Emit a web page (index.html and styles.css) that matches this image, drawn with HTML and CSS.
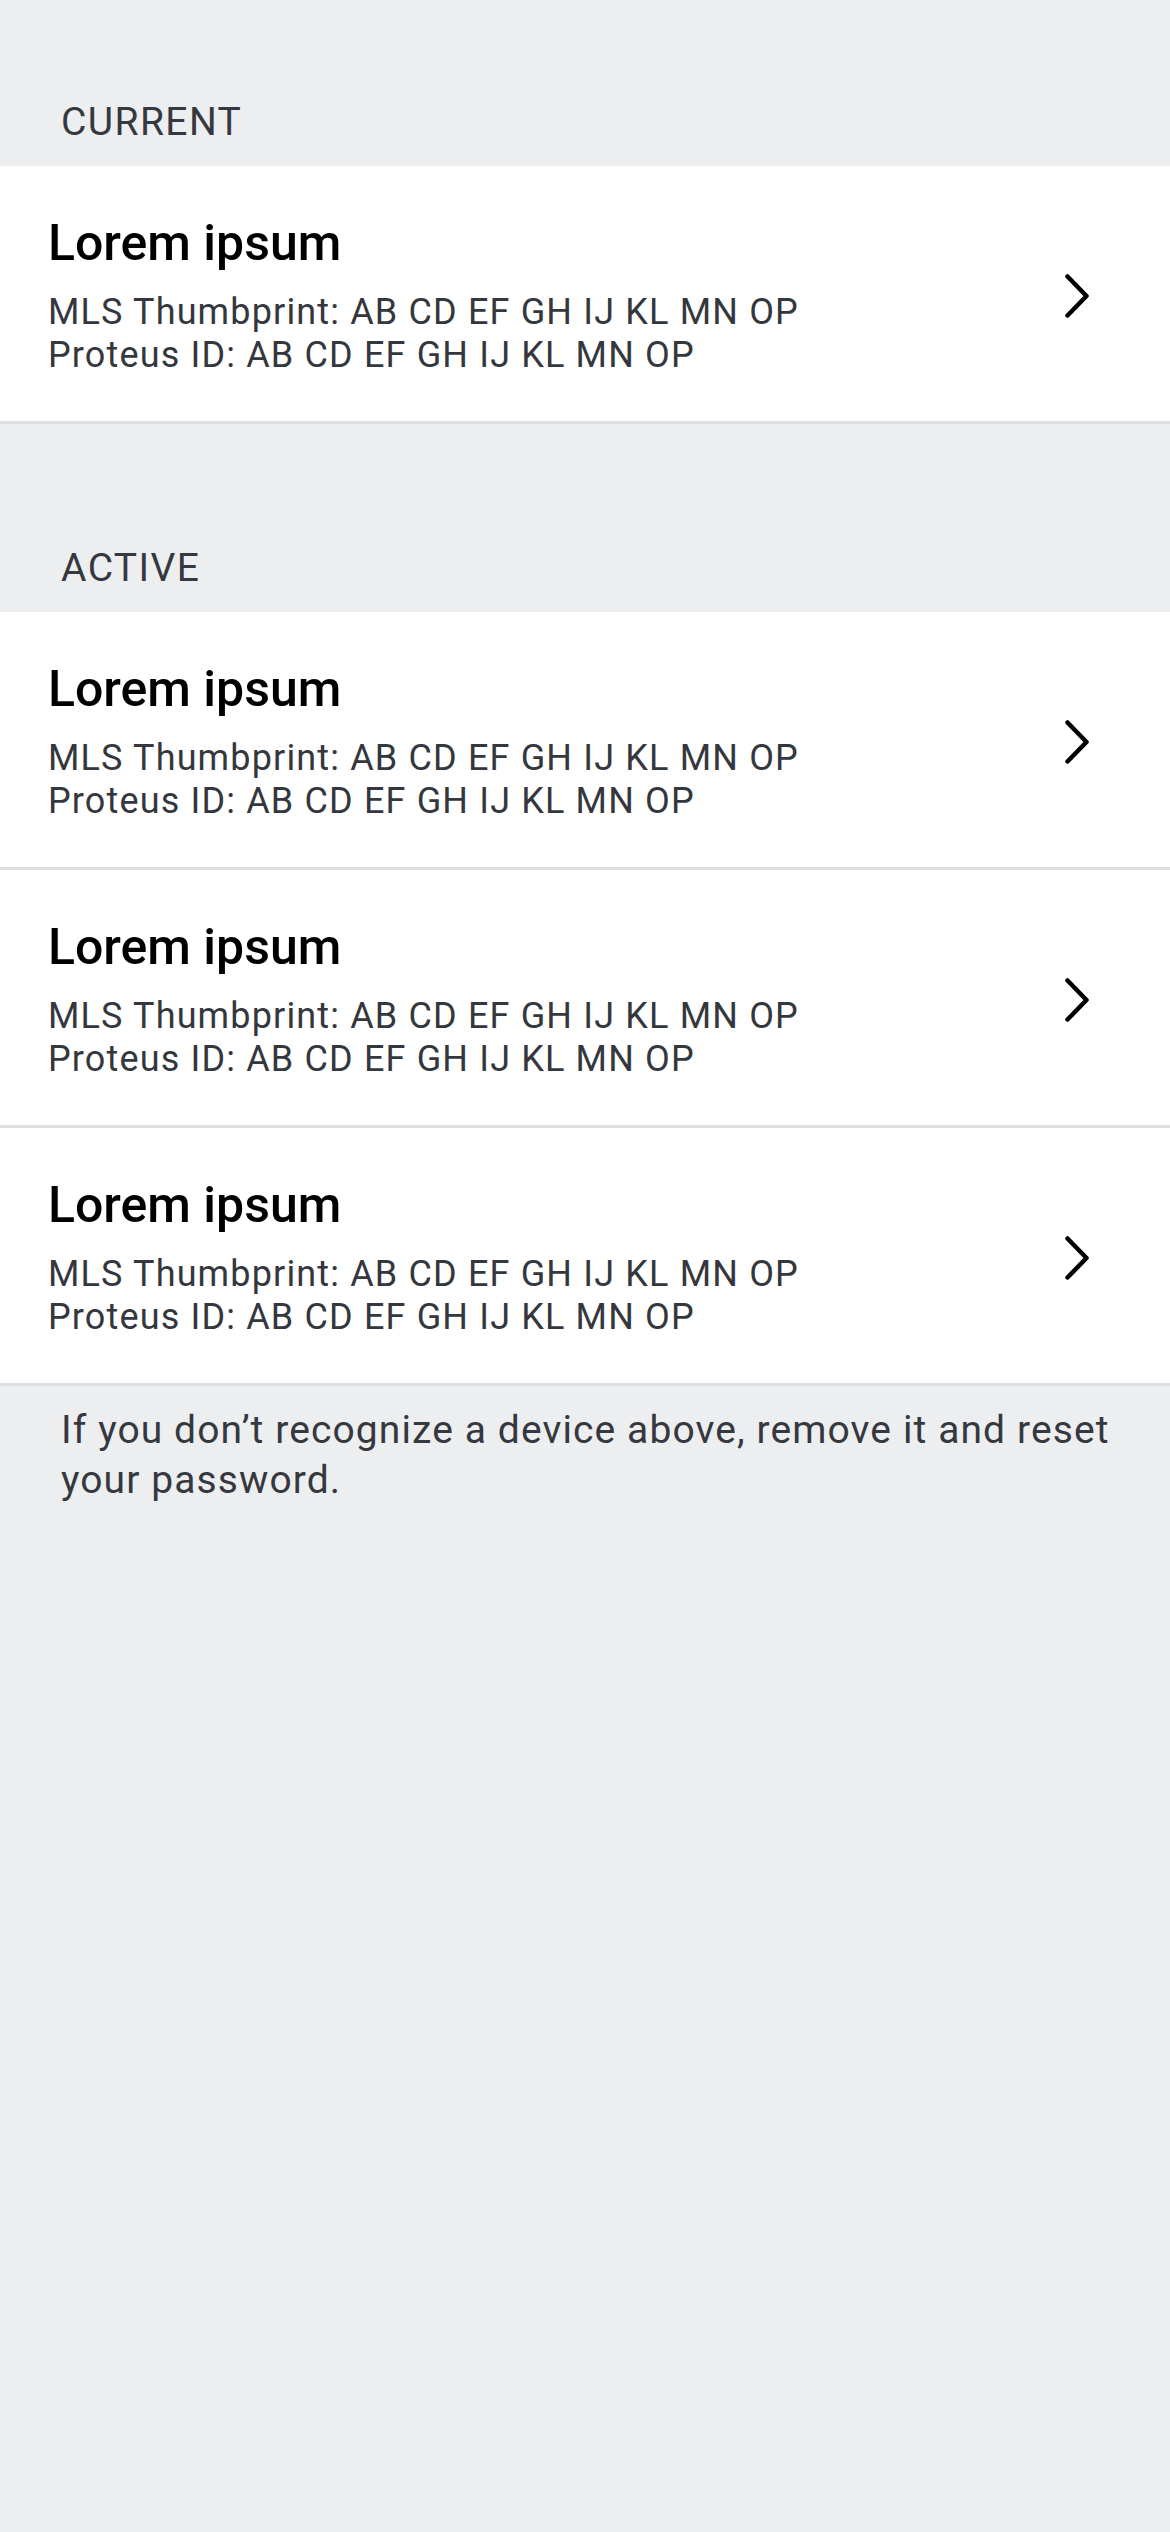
FILE: index.html
```html
<!DOCTYPE html>
<html lang="en">
<head>
<meta charset="utf-8">
<title>Devices</title>
<link rel="stylesheet" href="styles.css">
</head>
<body>
<main class="page">
  <section class="section">
    <h2 class="section-header">Current</h2>
    <ul class="list">
      <li class="row">
        <div class="row-text">
          <div class="row-title">Lorem ipsum</div>
          <div class="row-sub">MLS Thumbprint: AB CD EF GH IJ KL MN OP</div>
          <div class="row-sub">Proteus ID: AB CD EF GH IJ KL MN OP</div>
        </div>
        <svg class="chevron" viewBox="0 0 24 44" width="24" height="44"><path d="M2.5 2.5 L21.5 22 L2.5 41.5"/></svg>
      </li>
    </ul>
  </section>
  <section class="section section-next">
    <h2 class="section-header">Active</h2>
    <ul class="list">
      <li class="row">
        <div class="row-text">
          <div class="row-title">Lorem ipsum</div>
          <div class="row-sub">MLS Thumbprint: AB CD EF GH IJ KL MN OP</div>
          <div class="row-sub">Proteus ID: AB CD EF GH IJ KL MN OP</div>
        </div>
        <svg class="chevron" viewBox="0 0 24 44" width="24" height="44"><path d="M2.5 2.5 L21.5 22 L2.5 41.5"/></svg>
      </li>
      <li class="row">
        <div class="row-text">
          <div class="row-title">Lorem ipsum</div>
          <div class="row-sub">MLS Thumbprint: AB CD EF GH IJ KL MN OP</div>
          <div class="row-sub">Proteus ID: AB CD EF GH IJ KL MN OP</div>
        </div>
        <svg class="chevron" viewBox="0 0 24 44" width="24" height="44"><path d="M2.5 2.5 L21.5 22 L2.5 41.5"/></svg>
      </li>
      <li class="row">
        <div class="row-text">
          <div class="row-title">Lorem ipsum</div>
          <div class="row-sub">MLS Thumbprint: AB CD EF GH IJ KL MN OP</div>
          <div class="row-sub">Proteus ID: AB CD EF GH IJ KL MN OP</div>
        </div>
        <svg class="chevron" viewBox="0 0 24 44" width="24" height="44"><path d="M2.5 2.5 L21.5 22 L2.5 41.5"/></svg>
      </li>
    </ul>
    <p class="footer-note">If you don’t recognize a device above, remove it and reset your password.</p>
  </section>
</main>
</body>
</html>
```
FILE: styles.css
```css
html, body {
  margin: 0;
  padding: 0;
}
body {
  background: #edeef0;
  font-family: Roboto, "Liberation Sans", sans-serif;
  min-height: 2532px;
}
.page {
  display: flex;
  flex-direction: column;
}
.section-next {
  margin-top: 22px;
}
.section-header {
  margin: 0;
  padding: 99px 59px 21px 61px;
  font-size: 39px;
  line-height: 46px;
  font-weight: 400;
  text-transform: uppercase;
  color: #35383e;
  letter-spacing: 1.4px;
}
.list {
  list-style: none;
  margin: 0;
  padding: 0;
  background: #fff;
}
.row {
  display: flex;
  align-items: center;
  justify-content: space-between;
  box-sizing: border-box;
  padding: 48px 81px 44px 48px;
  border-bottom: 3px solid #dcdee1;
}
.row-text {
  display: flex;
  flex-direction: column;
}
.row-title {
  font-size: 50px;
  line-height: 59px;
  font-weight: 500;
  color: #000;
  margin-bottom: 18px;
}
.row-sub {
  font-size: 36px;
  line-height: 43px;
  color: #34373d;
  letter-spacing: 1.15px;
}
.chevron {
  flex: none;
  fill: none;
  stroke: #000;
  stroke-width: 4.5;
  stroke-linecap: round;
  stroke-linejoin: round;
}
.footer-note {
  margin: 0;
  padding: 19px 40px 0 61px;
  font-size: 39px;
  line-height: 50px;
  color: #35383e;
  letter-spacing: 1.1px;
}
```
